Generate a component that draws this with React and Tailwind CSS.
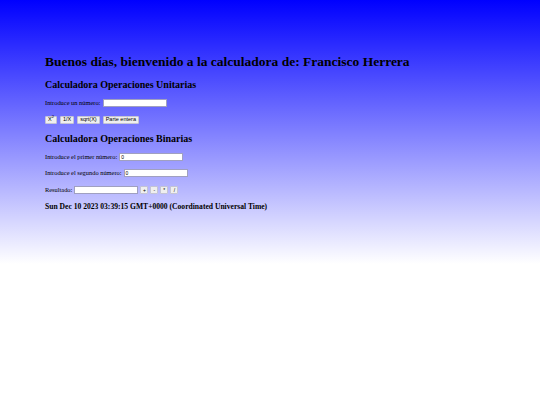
export default function App() {
  const serif = { fontFamily: '"Liberation Serif", "Times New Roman", serif' };
  const btn =
    "h-[8px] px-[2px] bg-[#efefef] border border-[#c4c4d4] rounded-[1px] text-[5.5px] leading-none text-black flex items-center";
  const sbtn =
    "h-[8px] w-[8px] justify-center bg-[#efefef] border border-[#c4c4d4] rounded-[1px] text-[5px] leading-none text-black flex items-center";
  const btnFont = { fontFamily: '"Liberation Sans", Arial, sans-serif' };
  const input = "w-[64px] h-[8px] bg-white border border-[#a0a0c0] text-[5px] flex items-center pl-[1px]";
  return (
    <div className="w-[540px] h-[405px] bg-white" style={serif}>
      <div className="h-[264px] bg-[linear-gradient(to_bottom,#0000ff,#ffffff)] pl-[45px] pt-[55px] text-black">
        <h1 className="h-[14px] flex items-center text-[13.5px] font-bold leading-none">
          Buenos días, bienvenido a la calculadora de: Francisco Herrera
        </h1>
        <h2 className="h-[10px] flex items-center text-[10px] font-bold leading-none mt-[11px]">
          Calculadora Operaciones Unitarias
        </h2>
        <div className="h-[8px] flex items-center mt-[9px] text-[6.4px] leading-none">
          <span>Introduce un número:</span>
          <div className={"ml-[3px] " + input} />
        </div>
        <div className="h-[8px] flex items-center gap-[3px] mt-[9px]" style={btnFont}>
          <div className={btn}>
            X<sup className="text-[4px] -mt-[2px]">2</sup>
          </div>
          <div className={btn}>1/X</div>
          <div className={btn}>sqrt(X)</div>
          <div className={btn}>Parte entera</div>
        </div>
        <h2 className="h-[10px] flex items-center text-[10px] font-bold leading-none mt-[10px]">
          Calculadora Operaciones Binarias
        </h2>
        <div className="h-[8px] flex items-center mt-[9px] text-[6.4px] leading-none">
          <span>Introduce el primer número:</span>
          <div className={"ml-[2px] " + input} style={btnFont}>0</div>
        </div>
        <div className="h-[8px] flex items-center mt-[8px] text-[6.4px] leading-none">
          <span>Introduce el segundo número:</span>
          <div className={"ml-[2px] " + input} style={btnFont}>0</div>
        </div>
        <div className="h-[8px] flex items-center mt-[9px] text-[6.4px] leading-none">
          <span>Resultado:</span>
          <div className={"ml-[2px] " + input} />
          <div className="flex items-center gap-[2px] ml-[2px]" style={btnFont}>
            <div className={sbtn}>+</div>
            <div className={sbtn}>-</div>
            <div className={sbtn}>*</div>
            <div className={sbtn}>/</div>
          </div>
        </div>
        <div className="h-[8px] flex items-center text-[7.6px] font-bold leading-none mt-[9px]">
          Sun Dec 10 2023 03:39:15 GMT+0000 (Coordinated Universal Time)
        </div>
      </div>
    </div>
  );
}
